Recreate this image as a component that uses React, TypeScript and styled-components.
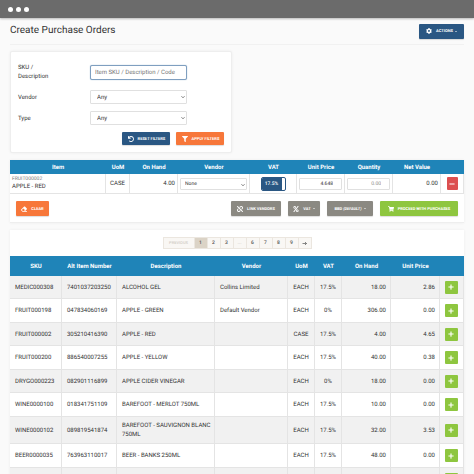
import React from "react";
import styled, { createGlobalStyle, css } from "styled-components";
import { FaCog, FaUndo, FaFilter, FaEraser, FaUnlink, FaPercent, FaShoppingCart, FaPlus, FaMinus } from "react-icons/fa";

const blue = "#1f84b8";
const navy = "#2a5783";
const orange = "#f7773a";
const green = "#8ec63f";
const grey = "#8b8982";
const red = "#dc4f50";

const Global = createGlobalStyle`
  *, *::before, *::after { box-sizing: border-box; }
  html, body { margin: 0; background: #fafafa; }
  body, button, input, select {
    font-family: Roboto, "Liberation Sans", sans-serif;
    text-rendering: geometricPrecision;
  }
  body { color: #333; font-size: 6px; line-height: 9px; }
`;

const Window = styled.div`
  height: 100vh;
  overflow: hidden;
`;

const TitleBar = styled.div`
  display: flex;
  align-items: center;
  gap: 3px;
  height: 18px;
  padding: 0 8px;
  background: #6b6b6b;
  box-shadow: 0 1px 2px #0004;
`;

const Dot = styled.span`
  width: 5px;
  height: 5px;
  border-radius: 50%;
  background: #fff;
`;

const Page = styled.main`
  padding: 0 10px;
`;

const Header = styled.header`
  display: flex;
  align-items: center;
  justify-content: space-between;
  height: 27px;
  border-bottom: 1px solid #f1f1f1;
`;

const Title = styled.h1`
  margin: 0;
  font-size: 10px;
  line-height: 12px;
  font-weight: 400;
  color: #333;
`;

const Button = styled.button<{ $bg: string; $w: number; $small?: boolean }>`
  display: flex;
  align-items: center;
  justify-content: center;
  gap: 4px;
  width: ${(p) => p.$w}px;
  height: ${(p) => (p.$small ? 13 : 15)}px;
  padding: 0;
  border: 0;
  border-radius: 1px;
  background: ${(p) => p.$bg};
  box-shadow: 0 1px 1px #0002;
  color: #fff;
  font-size: 4px;
  line-height: 6px;
  font-weight: 700;
  white-space: nowrap;
  svg { width: 6px; height: 6px; flex: none; }
`;

const Caret = styled.span`
  margin-left: -2px;
  border: 1px solid transparent;
  border-top-color: #fff;
  border-bottom: 0;
`;

const card = css`
  border: 1px solid #eee;
  background: #fff;
  box-shadow: 0 0 3px #0000000f;
`;

const FilterCard = styled.form`
  ${card}
  display: flex;
  flex-direction: column;
  gap: 7px;
  width: 49%;
  margin-top: 6px;
  padding: 9px 7px 7px;
  border-radius: 2px;
`;

const Field = styled.div<{ $tall?: boolean }>`
  display: grid;
  grid-template-columns: 72px 97px;
  align-items: center;
  min-height: ${(p) => (p.$tall ? 22 : 14)}px;
`;

const Label = styled.label`
  width: 40px;
`;

const boxed = css`
  display: block;
  width: 100%;
  height: 14px;
  margin: 0;
  border: 1px solid #e0e0e0;
  border-radius: 1px;
  background: #fff;
  color: #333;
  outline: 0;
`;

const SearchInput = styled.input`
  ${boxed}
  height: 15px;
  padding: 0 4px;
  border-color: #7f9fc0;
  border-radius: 2px;
  box-shadow: 0 0 1px #7f9fc0;
  font-size: 6px;
  &::placeholder { color: #757575; }
`;

const SelectWrap = styled.div`
  position: relative;
  svg {
    position: absolute;
    right: 2px;
    top: 5px;
    width: 4px;
    height: 4px;
    pointer-events: none;
  }
`;

const Select = styled.select<{ $compact?: boolean }>`
  ${boxed}
  appearance: none;
  height: ${(p) => (p.$compact ? 12 : 14)}px;
  padding: 0 ${(p) => (p.$compact ? 4 : 6)}px;
  font-size: ${(p) => (p.$compact ? 5 : 6)}px;
`;

const ButtonRow = styled.div`
  display: flex;
  gap: 6px;
  justify-content: flex-end;
`;

const Panel = styled.section`
  ${card}
  border-width: 0 0 1px;
  margin-top: 7px;
`;

const Toolbar = styled.div`
  display: flex;
  justify-content: space-between;
  padding: 7px 6px 6px;
`;

const Group = styled.div`
  display: flex;
  gap: 7px;
`;

const Table = styled.table`
  width: 100%;
  table-layout: fixed;
  border-collapse: separate;
  border-spacing: 0;
`;

const Th = styled.th<{ $h: number }>`
  height: ${(p) => p.$h}px;
  padding: 0;
  background: ${blue};
  color: #fff;
  font-weight: 700;
  text-align: center;
`;

type Align = "left" | "center" | "right";

const Td = styled.td<{ $align?: Align; $pad?: number; $end?: number }>`
  padding: 0 ${(p) => p.$end ?? p.$pad ?? 5}px 0 ${(p) => p.$pad ?? 5}px;
  border: 0 solid #e4e4e4;
  border-width: 0 1px 1px 0;
  text-align: ${(p) => p.$align ?? "left"};
`;

const OrderRow = styled.tr`
  height: 20px;
`;

const StockRow = styled.tr`
  height: 23px;
  &:nth-child(odd) { background: #f1f1f1; }
  &:nth-child(even) { height: 24px; }
`;

const TallStockRow = styled(StockRow)`
  height: 27px;
`;

const Sku = styled.div`
  font-size: 5px;
  line-height: 7px;
  color: #777;
`;

const ItemName = styled.div`
  line-height: 8px;
`;

const NumberInput = styled.input<{ $muted?: boolean }>`
  ${boxed}
  height: 12px;
  padding: 0 8px;
  font-size: 5px;
  text-align: right;
  color: ${(p) => (p.$muted ? "#888" : "#333")};
`;

const Switch = styled.label`
  display: flex;
  width: 25px;
  height: 14px;
  margin: 0 auto;
  border: 1px solid ${navy};
  border-radius: 2px;
  background: #fff;
  overflow: hidden;
`;

const SwitchInput = styled.input`
  appearance: none;
  order: 2;
  width: 3px;
  margin: 0;
`;

const SwitchText = styled.span`
  flex: 1;
  background: ${navy};
  color: #fff;
  font-size: 5px;
  line-height: 12px;
  font-weight: 500;
  text-align: center;
`;

const IconButton = styled.button<{ $bg: string }>`
  display: flex;
  align-items: center;
  justify-content: center;
  width: 13px;
  height: 13px;
  margin: 0 auto;
  padding: 0;
  border: 0;
  border-radius: 1px;
  background: ${(p) => p.$bg};
  color: #fff;
  svg { width: 6px; height: 6px; }
`;

const MinusButton = styled(IconButton)`
  width: 11px;
`;

const Pager = styled.nav`
  display: flex;
  justify-content: center;
  padding: 7px 0;
`;

const PageButton = styled.button<{ $active?: boolean; $wide?: boolean }>`
  width: ${(p) => (p.$wide ? 32 : 13)}px;
  height: 12px;
  padding: 0;
  border: 1px solid #ebe6df;
  border-left-width: ${(p) => (p.$wide ? 1 : 0)}px;
  background: ${(p) => (p.$active ? "#dbd3c6" : "#f9f7f4")};
  color: #555;
  font-size: ${(p) => (p.$wide ? 4 : 5)}px;
  line-height: 6px;
  font-weight: 500;
  &:disabled { color: #d2cdc6; }
  svg { display: block; margin: 0 auto; width: 5px; height: 5px; }
`;

const Chevron = () => (
  <svg viewBox="0 0 8 8" fill="none" stroke="#555" strokeWidth="1.6" aria-hidden="true">
    <path d="M1 2.5 4 5.5 7 2.5" />
  </svg>
);

const Arrow = () => (
  <svg viewBox="0 0 10 10" fill="none" stroke="#555" strokeWidth="1.4" aria-hidden="true">
    <path d="M1 5h8M6 2l3 3-3 3" />
  </svg>
);

const Columns = ({ widths }: { widths: number[] }) => {
  const total = widths.reduce((a, b) => a + b, 0);
  return (
    <colgroup>
      {widths.map((w, i) => (
        <col key={i} style={{ width: `${(w / total) * 100}%` }} />
      ))}
    </colgroup>
  );
};

const HeadRow = ({ names, height }: { names: string[]; height: number }) => (
  <thead>
    <tr>
      {names.map((n, i) => (
        <Th key={i} $h={height} scope="col">{n}</Th>
      ))}
    </tr>
  </thead>
);

const stock = [
  ["MEDIC000308", "7401037203250", "ALCOHOL GEL", "Collins Limited", "EACH", "17.5%", "18.00", "2.86"],
  ["FRUIT000198", "047834060169", "APPLE - GREEN", "Default Vendor", "EACH", "0%", "306.00", "0.00"],
  ["FRUIT000002", "305210416390", "APPLE - RED", "", "CASE", "17.5%", "4.00", "4.65"],
  ["FRUIT000200", "886540007255", "APPLE - YELLOW", "", "EACH", "17.5%", "40.00", "0.38"],
  ["DRYGO000223", "082901116899", "APPLE CIDER VINEGAR", "", "EACH", "0%", "18.00", "0.00"],
  ["WINE0000100", "018341751109", "BAREFOOT - MERLOT 750ML", "", "EACH", "17.5%", "10.00", "0.00"],
  ["WINE0000102", "089819541874", "BAREFOOT - SAUVIGNON BLANC 750ML", "", "EACH", "17.5%", "32.00", "3.53"],
  ["BEER0000035", "763963110017", "BEER - BANKS 250ML", "", "EACH", "17.5%", "48.00", "0.00"],
  ["", "", "", "", "", "", "", ""],
];

const aligns: Align[] = ["left", "left", "left", "left", "center", "center", "right", "right"];
const endPadding: Record<Align, number> = { left: 1, center: 0, right: 4 };

export default function App() {
  return (
    <Window>
      <Global />
      <TitleBar><Dot /><Dot /><Dot /></TitleBar>
      <Page>
        <Header>
          <Title>Create Purchase Orders</Title>
          <Button type="button" $bg={navy} $w={45}><FaCog />ACTIONS <Caret /></Button>
        </Header>

        <FilterCard onSubmit={(e) => e.preventDefault()}>
          <Field $tall>
            <Label htmlFor="sku">SKU / Description</Label>
            <SearchInput id="sku" placeholder="Item SKU / Description / Code" />
          </Field>
          {["Vendor", "Type"].map((name) => (
            <Field key={name}>
              <Label htmlFor={name}>{name}</Label>
              <SelectWrap>
                <Select id={name}><option>Any</option></Select>
                <Chevron />
              </SelectWrap>
            </Field>
          ))}
          <ButtonRow>
            <Button type="reset" $bg={navy} $w={48} $small><FaUndo />RESET FILTERS</Button>
            <Button type="submit" $bg={orange} $w={48} $small><FaFilter />APPLY FILTERS</Button>
          </ButtonRow>
        </FilterCard>

        <Panel>
          <Table>
            <Columns widths={[96, 24, 48, 72, 47, 48, 48, 48, 23]} />
            <HeadRow height={14} names={["Item", "UoM", "On Hand", "Vendor", "VAT", "Unit Price", "Quantity", "Net Value", ""]} />
            <tbody>
              <OrderRow>
                <Td $pad={2}><Sku>FRUIT000002</Sku><ItemName>APPLE - RED</ItemName></Td>
                <Td $align="center" $pad={0}>CASE</Td>
                <Td $align="right" $pad={2}>4.00</Td>
                <Td $pad={2}>
                  <SelectWrap>
                    <Select $compact aria-label="Vendor for APPLE - RED"><option>None</option></Select>
                    <Chevron />
                  </SelectWrap>
                </Td>
                <Td $pad={2}>
                  <Switch><SwitchInput type="checkbox" defaultChecked /><SwitchText>17.5%</SwitchText></Switch>
                </Td>
                <Td $pad={2}><NumberInput aria-label="Unit price" defaultValue="4.648" /></Td>
                <Td $pad={2}><NumberInput $muted aria-label="Quantity" defaultValue="0.00" /></Td>
                <Td $align="right" $pad={2}>0.00</Td>
                <Td $pad={0}><MinusButton type="button" $bg={red} aria-label="Remove"><FaMinus /></MinusButton></Td>
              </OrderRow>
            </tbody>
          </Table>
          <Toolbar>
            <Button type="button" $bg={orange} $w={33}><FaEraser />CLEAR</Button>
            <Group>
              <Button type="button" $bg={grey} $w={50}><FaUnlink />LINK VENDORS</Button>
              <Button type="button" $bg={grey} $w={32}><FaPercent />VAT <Caret /></Button>
              <Button type="button" $bg={grey} $w={46}><span>BBD <i>(DEFAULT)</i></span><Caret /></Button>
              <Button type="button" $bg={green} $w={78}><FaShoppingCart />PROCEED WITH PURCHASES</Button>
            </Group>
          </Toolbar>
        </Panel>

        <Panel>
          <Pager aria-label="Pages">
            <PageButton $wide disabled>PREVIOUS</PageButton>
            <PageButton $active aria-current="page">1</PageButton>
            <PageButton>2</PageButton>
            <PageButton>3</PageButton>
            <PageButton disabled>...</PageButton>
            {[6, 7, 8, 9].map((n) => <PageButton key={n}>{n}</PageButton>)}
            <PageButton aria-label="Next"><Arrow /></PageButton>
          </Pager>
          <Table>
            <Columns widths={[52, 55, 98, 73, 27, 27, 49, 49, 24]} />
            <HeadRow height={20} names={["SKU", "Alt Item Number", "Description", "Vendor", "UoM", "VAT", "On Hand", "Unit Price", ""]} />
            <tbody>
              {stock.map((row, r) => {
                const Row = row[2].length > 26 ? TallStockRow : StockRow;
                return (
                  <Row key={r}>
                    {row.map((cell, c) => (
                      <Td key={c} $align={aligns[c]} $pad={aligns[c] === "center" ? 0 : 5} $end={endPadding[aligns[c]]}>{cell}</Td>
                    ))}
                    <Td $pad={0}><IconButton type="button" $bg={green} aria-label={`Add ${row[2]}`}><FaPlus /></IconButton></Td>
                  </Row>
                );
              })}
            </tbody>
          </Table>
        </Panel>
      </Page>
    </Window>
  );
}
